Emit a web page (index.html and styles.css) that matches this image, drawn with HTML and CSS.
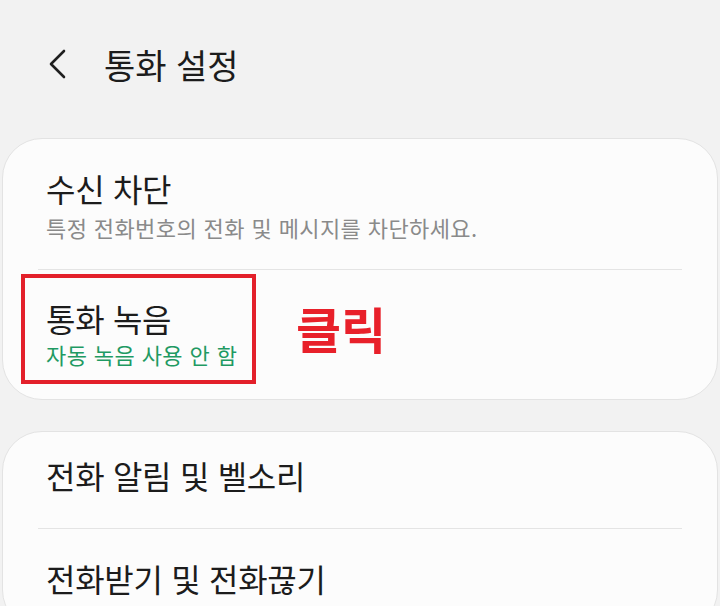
FILE: index.html
```html
<!DOCTYPE html>
<html lang="ko">
<head>
<meta charset="utf-8">
<link rel="stylesheet" href="styles.css">
</head>
<body>
<div class="screen">
  <header class="topbar">
    <svg class="back" width="24" height="32" viewBox="0 0 24 32"><polyline points="18,3 5,16 18,29" fill="none" stroke="#1f1f1f" stroke-width="2.6" stroke-linecap="round" stroke-linejoin="round"/></svg>
    <h1 class="title">통화 설정</h1>
  </header>

  <section class="card">
    <div class="item item-block">
      <div class="item-title">수신 차단</div>
      <div class="item-sub">특정 전화번호의 전화 및 메시지를 차단하세요.</div>
    </div>
    <div class="divider"></div>
    <div class="item item-rec">
      <div class="item-title">통화 녹음</div>
      <div class="item-sub green">자동 녹음 사용 안 함</div>
      <div class="highlight"></div>
      <div class="click-label">클릭</div>
    </div>
  </section>

  <section class="card card2">
    <div class="item item-ring">
      <div class="item-title">전화 알림 및 벨소리</div>
    </div>
    <div class="divider"></div>
    <div class="item item-answer">
      <div class="item-title">전화받기 및 전화끊기</div>
    </div>
  </section>
</div>
</body>
</html>
```

FILE: styles.css
```css
* { box-sizing: border-box; margin: 0; padding: 0; }
html, body { width: 720px; height: 606px; overflow: hidden; }
body {
  background: #f2f2f2;
  font-family: "Noto Sans CJK KR", "Noto Sans", sans-serif;
  color: #1c1c1c;
}
.screen { display: flex; flex-direction: column; }
.topbar {
  height: 138px;
  display: flex;
  align-items: center;
  padding: 0 0 10px 46px;
}
.back { margin-right: 34px; }
.title {
  font-size: 34px;
  font-weight: 400;
  letter-spacing: 0;
  color: #1c1c1c;
}
.card {
  margin: 0 2px;
  background: #fcfcfc;
  border: 1px solid #e3e3e3;
  border-radius: 40px;
  display: flex;
  flex-direction: column;
}
.card2 { margin-top: 31px; }
.item {
  position: relative;
  padding: 0 46px 0 43px;
}
.item-block { height: 130px; padding-top: 27px; }
.item-block .item-sub { margin-top: 2px; }
.item-rec { height: 129px; padding-top: 26px; }
.item-rec .item-sub { margin-top: -1px; }
.item-ring { height: 96px; padding-top: 21px; }
.item-answer { height: 100px; padding-top: 27px; }
.item-title {
  font-size: 32px;
  line-height: 44px;
  letter-spacing: -0.3px;
}
.item-sub {
  font-size: 22px;
  line-height: 30px;
  color: #8a8a8a;
  letter-spacing: 0.4px;
}
.item-sub.green { color: #1f9a63; }
.divider {
  height: 1px;
  background: #e4e4e4;
  margin: 0 35px;
}
.highlight {
  position: absolute;
  left: 18px;
  top: 4px;
  width: 235px;
  height: 110px;
  border: 4px solid #e3202a;
}
.click-label {
  position: absolute;
  left: 293px;
  top: 30px;
  font-size: 49px;
  font-weight: 700;
  line-height: 56px;
  color: #e8202a;
  letter-spacing: 0;
}
```
